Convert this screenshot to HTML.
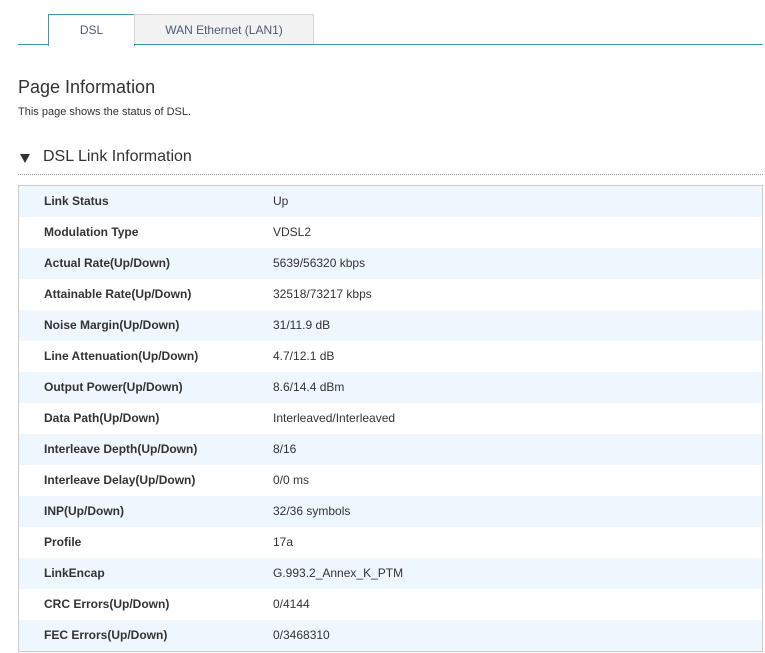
<!DOCTYPE html>
<html><head><style>
body{margin:0;background:#fff;font-family:"Liberation Sans",Arial,sans-serif;width:765px;height:653px;overflow:hidden;position:relative}
.abs{position:absolute}
.line{left:18px;top:44px;width:745px;height:1px;background:#3a9ca8}
.t1{left:48px;top:14px;width:85px;height:31px;border:1px solid #3a9ca8;border-bottom:none;background:#fff;color:#4a5a78;font-size:12px;text-align:center;line-height:31px}
.t2{left:134px;top:14px;width:178px;height:29px;border:1px solid #d4d4d4;border-bottom:none;background:#f2f2f2;color:#4a5a78;font-size:12px;text-align:center;line-height:30px}
h1{position:absolute;left:18px;top:77px;margin:0;font-weight:normal;font-size:18px;color:#333}
.desc{left:18px;top:106px;font-size:11px;color:#333}
.sec{left:43px;top:148px;font-size:16px;color:#333}
.tri{left:20px;top:154px;width:0;height:0;border-left:5px solid transparent;border-right:5px solid transparent;border-top:9px solid #333}
.dot{left:18px;top:174px;width:745px;border-top:1px dotted #999}
table{position:absolute;left:18px;top:185px;width:745px;border-collapse:collapse;border:1px solid #ccc;font-size:12px;color:#333}
td{height:31px;padding:0;line-height:31px}
td.l{font-weight:bold;padding-left:25px;width:229px}
tr:nth-child(odd){background:#eef6fe}
</style></head><body>
<div class="abs line"></div>
<div class="abs t1">DSL</div>
<div class="abs t2">WAN Ethernet (LAN1)</div>
<h1>Page Information</h1>
<div class="abs desc">This page shows the status of DSL.</div>
<div class="abs tri"></div>
<div class="abs sec">DSL Link Information</div>
<div class="abs dot"></div>
<table>
<tr><td class="l">Link Status</td><td>Up</td></tr>
<tr><td class="l">Modulation Type</td><td>VDSL2</td></tr>
<tr><td class="l">Actual Rate(Up/Down)</td><td>5639/56320 kbps</td></tr>
<tr><td class="l">Attainable Rate(Up/Down)</td><td>32518/73217 kbps</td></tr>
<tr><td class="l">Noise Margin(Up/Down)</td><td>31/11.9 dB</td></tr>
<tr><td class="l">Line Attenuation(Up/Down)</td><td>4.7/12.1 dB</td></tr>
<tr><td class="l">Output Power(Up/Down)</td><td>8.6/14.4 dBm</td></tr>
<tr><td class="l">Data Path(Up/Down)</td><td>Interleaved/Interleaved</td></tr>
<tr><td class="l">Interleave Depth(Up/Down)</td><td>8/16</td></tr>
<tr><td class="l">Interleave Delay(Up/Down)</td><td>0/0 ms</td></tr>
<tr><td class="l">INP(Up/Down)</td><td>32/36 symbols</td></tr>
<tr><td class="l">Profile</td><td>17a</td></tr>
<tr><td class="l">LinkEncap</td><td>G.993.2_Annex_K_PTM</td></tr>
<tr><td class="l">CRC Errors(Up/Down)</td><td>0/4144</td></tr>
<tr><td class="l">FEC Errors(Up/Down)</td><td>0/3468310</td></tr>
</table>
</body></html>
